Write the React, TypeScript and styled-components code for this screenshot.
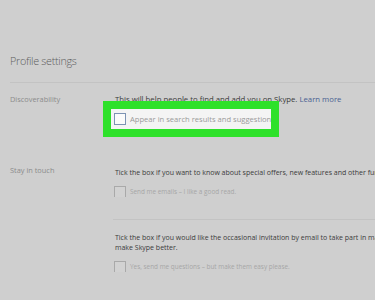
import React from 'react'
import styled, { createGlobalStyle } from 'styled-components'

const Global = createGlobalStyle`
  html, body {
    margin: 0;
    padding: 0;
    background: #cfcfcf;
  }
  body {
    font-family: "Open Sans", "Liberation Sans", sans-serif;
  }
`

const Page = styled.div`
  width: 375px;
  height: 300px;
  overflow: hidden;
  background: #cfcfcf;
  padding-top: 53px;
  box-sizing: border-box;
`

const Title = styled.h1`
  margin: 0 0 0 10px;
  font-size: 10.8px;
  line-height: 16px;
  font-weight: 300;
  letter-spacing: -0.3px;
  color: #5e5e5e;
  white-space: nowrap;
`

const Divider = styled.div<{ $inset?: number }>`
  height: 1px;
  background: #c3c3c3;
  margin-left: ${(p) => p.$inset ?? 10}px;
`

const Section = styled.div<{ $top: number }>`
  display: grid;
  grid-template-columns: 104px 1fr;
  margin-top: ${(p) => p.$top}px;
  padding-left: 10px;
`

const Label = styled.div<{ $shift?: number }>`
  font-size: 7.4px;
  line-height: 10px;
  color: #8c8c8c;
  white-space: nowrap;
  margin-top: ${(p) => p.$shift ?? 0}px;
`

const Content = styled.div`
  display: flex;
  flex-direction: column;
  min-width: 0;
`

const Description = styled.p<{ $size?: number }>`
  margin: 0 0 0 1px;
  font-size: ${(p) => p.$size ?? 7}px;
  line-height: 10px;
  color: #3b3b3b;
  white-space: nowrap;
`

const Link = styled.a`
  color: #4a5f92;
  text-decoration: none;
`

const CheckRow = styled.label<{ $highlight?: boolean; $top: number }>`
  display: flex;
  align-items: center;
  gap: 4px;
  margin-top: ${(p) => p.$top}px;
  white-space: nowrap;
  overflow: hidden;
  ${(p) =>
    p.$highlight
      ? `
    width: 157px;
    height: 20px;
    margin-left: -11px;
    padding-left: 3px;
    box-sizing: content-box;
    background: #f4f4f4;
    border: 8px solid #2ee12a;
  `
      : `
    height: 11px;
  `}
`

const Box = styled.span<{ $highlight?: boolean }>`
  flex: none;
  width: 10px;
  height: 10px;
  border: 1px solid ${(p) => (p.$highlight ? '#7d93b4' : '#a9a9a9')};
  background: ${(p) => (p.$highlight ? '#fbfbfb' : '#d2d2d2')};
`

const CheckText = styled.span<{ $highlight?: boolean }>`
  font-size: ${(p) => (p.$highlight ? 7.6 : 6.4)}px;
  line-height: 10px;
  color: ${(p) => (p.$highlight ? '#9a9a9a' : '#a6a6a6')};
`

export default function App() {
  return (
    <Page>
      <Global />
      <Title>Profile settings</Title>
      <Divider style={{ marginTop: 13 }} />

      <Section $top={11}>
        <Label>Discoverability</Label>
        <Content>
          <Description $size={7.75}>
            This will help people to find and add you on Skype. <Link>Learn more</Link>
          </Description>
          <CheckRow $highlight $top={-3}>
            <Box $highlight />
            <CheckText $highlight>Appear in search results and suggestions</CheckText>
          </CheckRow>
        </Content>
      </Section>

      <Section $top={31}>
        <Label $shift={-3}>Stay in touch</Label>
        <Content>
          <Description>
            Tick the box if you want to know about special offers, new features and other fun stuff.
          </Description>
          <CheckRow $top={8}>
            <Box />
            <CheckText>Send me emails – I like a good read.</CheckText>
          </CheckRow>
          <Divider $inset={-1} style={{ marginTop: 22 }} />
          <Description style={{ marginTop: 13 }}>
            Tick the box if you would like the occasional invitation by email to take part in market research to help
          </Description>
          <Description>make Skype better.</Description>
          <CheckRow $top={8}>
            <Box />
            <CheckText>Yes, send me questions – but make them easy please.</CheckText>
          </CheckRow>
        </Content>
      </Section>
    </Page>
  )
}
